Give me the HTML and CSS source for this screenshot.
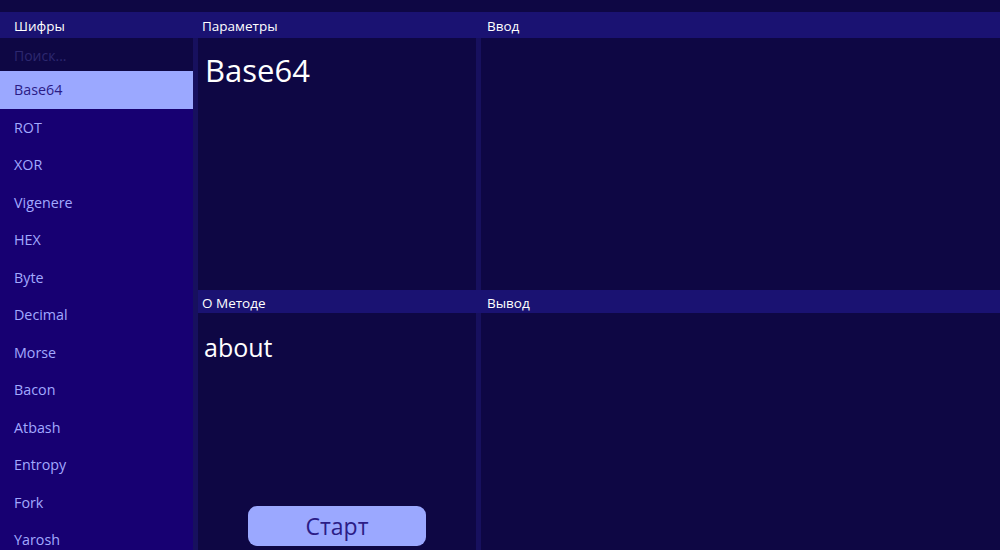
FILE: index.html
```html
<!DOCTYPE html>
<html lang="ru">
<head>
<meta charset="utf-8">
<title>Шифры</title>
<link rel="stylesheet" href="styles.css">
</head>
<body>
<div class="app">
  <div class="topstrip"></div>

  <div class="hdr c1">Шифры</div>
  <div class="hdr c2"></div>
  <div class="hdr c3">Параметры</div>
  <div class="hdr c4"></div>
  <div class="hdr c5">Ввод</div>

  <aside class="sidebar">
    <div class="search">Поиск...</div>
    <ul class="list">
      <li class="item selected">Base64</li>
      <li class="item">ROT</li>
      <li class="item">XOR</li>
      <li class="item">Vigenere</li>
      <li class="item">HEX</li>
      <li class="item">Byte</li>
      <li class="item">Decimal</li>
      <li class="item">Morse</li>
      <li class="item">Bacon</li>
      <li class="item">Atbash</li>
      <li class="item">Entropy</li>
      <li class="item">Fork</li>
      <li class="item">Yarosh</li>
    </ul>
  </aside>
  <div class="split-v"></div>

  <section class="panel params"><div class="title">Base64</div></section>
  <div class="split-mid top"></div>
  <section class="panel input"></section>

  <div class="hdr2 c3">О Методе</div>
  <div class="hdr2 c4"></div>
  <div class="hdr2 c5">Вывод</div>

  <section class="panel about">
    <div class="about-text">about</div>
    <button class="start">Старт</button>
  </section>
  <div class="split-mid bottom"></div>
  <section class="panel output"></section>
</div>
</body>
</html>
```

FILE: styles.css
```css
* { box-sizing: border-box; }
html, body { margin: 0; padding: 0; }
body {
  background: #0e0744;
  font-family: "Open Sans", "Noto Sans", sans-serif;
  color: #fff;
  overflow: hidden;
}
.app {
  width: 1000px;
  height: 550px;
  display: grid;
  grid-template-columns: 193px 5px 278px 5px 519px;
  grid-template-rows: 12px 26px 252px 23px 237px;
}
.topstrip { grid-column: 1 / 6; grid-row: 1; background: #0e0744; }

.hdr {
  grid-row: 2;
  background: #1a1272;
  font-size: 13.5px;
  line-height: 29px;
  white-space: nowrap;
}
.hdr.c1 { grid-column: 1; padding-left: 14px; }
.hdr.c2 { grid-column: 2; }
.hdr.c3 { grid-column: 3; padding-left: 4px; }
.hdr.c4 { grid-column: 4; }
.hdr.c5 { grid-column: 5; padding-left: 6px; }

.hdr2 {
  grid-row: 4;
  background: #1a1272;
  font-size: 13.5px;
  line-height: 26px;
  white-space: nowrap;
}
.hdr2.c3 { grid-column: 3; padding-left: 4px; }
.hdr2.c4 { grid-column: 4; }
.hdr2.c5 { grid-column: 5; padding-left: 6px; }

.sidebar {
  grid-column: 1;
  grid-row: 3 / 6;
  background: #170072;
  display: flex;
  flex-direction: column;
  overflow: hidden;
}
.search {
  height: 33px;
  flex: none;
  background: #0e0744;
  color: #2d2870;
  font-size: 14px;
  line-height: 36px;
  padding-left: 14px;
}
.list { list-style: none; margin: 0; padding: 0; }
.item {
  height: 37.5px;
  line-height: 38px;
  padding-left: 14px;
  font-size: 14.3px;
  color: #a2a9ff;
}
.item.selected {
  background: #9ba8ff;
  color: #2b1c86;
}

.split-v { grid-column: 2; grid-row: 3 / 6; background: #17105e; }
.split-mid { grid-column: 4; background: #17105e; }
.split-mid.top { grid-row: 3; }
.split-mid.bottom { grid-row: 5; }

.panel { background: #0e0744; }
.params { grid-column: 3; grid-row: 3; padding: 10px 0 0 7px; }
.input { grid-column: 5; grid-row: 3; }
.about {
  grid-column: 3;
  grid-row: 5;
  display: flex;
  flex-direction: column;
  align-items: center;
  padding: 14px 0 4px;
}
.output { grid-column: 5; grid-row: 5; }

.title {
  font-size: 31px;
  line-height: 44px;
}
.about-text {
  align-self: flex-start;
  padding-left: 6px;
  font-size: 25px;
  line-height: 40px;
}
.start {
  margin-top: auto;
  width: 178px;
  height: 40px;
  border: none;
  border-radius: 9px;
  background: #9ba8ff;
  color: #2b1c86;
  font-family: "Open Sans", "Noto Sans", sans-serif;
  font-size: 23px;
  line-height: 40px;
  padding: 0;
}
```
